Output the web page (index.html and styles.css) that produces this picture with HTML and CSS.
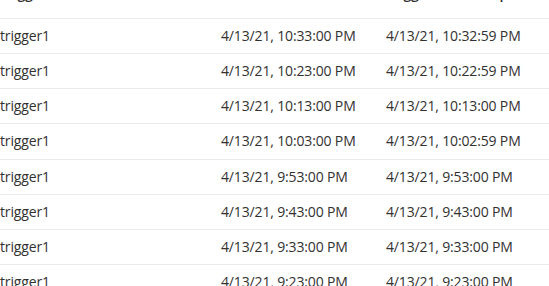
FILE: index.html
```html
<!DOCTYPE html>
<html>
<head>
<meta charset="utf-8">
<link rel="stylesheet" href="styles.css">
</head>
<body>
<div class="list">
  <div class="row header">
    <div class="cell">Trigger name</div>
    <div class="cell">Scheduled time</div>
    <div class="cell">Trigger timestamp</div>
  </div>
  <div class="row"><div class="cell">trigger1</div><div class="cell">4/13/21, 10:33:00 PM</div><div class="cell">4/13/21, 10:32:59 PM</div></div>
  <div class="row"><div class="cell">trigger1</div><div class="cell">4/13/21, 10:23:00 PM</div><div class="cell">4/13/21, 10:22:59 PM</div></div>
  <div class="row"><div class="cell">trigger1</div><div class="cell">4/13/21, 10:13:00 PM</div><div class="cell">4/13/21, 10:13:00 PM</div></div>
  <div class="row"><div class="cell">trigger1</div><div class="cell">4/13/21, 10:03:00 PM</div><div class="cell">4/13/21, 10:02:59 PM</div></div>
  <div class="row"><div class="cell">trigger1</div><div class="cell">4/13/21, 9:53:00 PM</div><div class="cell">4/13/21, 9:53:00 PM</div></div>
  <div class="row"><div class="cell">trigger1</div><div class="cell">4/13/21, 9:43:00 PM</div><div class="cell">4/13/21, 9:43:00 PM</div></div>
  <div class="row"><div class="cell">trigger1</div><div class="cell">4/13/21, 9:33:00 PM</div><div class="cell">4/13/21, 9:33:00 PM</div></div>
  <div class="row"><div class="cell">trigger1</div><div class="cell">4/13/21, 9:23:00 PM</div><div class="cell">4/13/21, 9:23:00 PM</div></div>
</div>
</body>
</html>
```
FILE: styles.css
```css
html, body {
  margin: 0;
  padding: 0;
  background: #ffffff;
  overflow: hidden;
}
body {
  font-family: "Open Sans", "Noto Sans", sans-serif;
  font-size: 14px;
  color: #323130;
  letter-spacing: -0.15px;
}
.list {
  margin-top: -24px;
}
.row {
  display: grid;
  grid-template-columns: 221px 165px 1fr;
  height: 35.15px;
  box-sizing: border-box;
  border-bottom: 1px solid #edebe9;
  align-items: center;
}
.row.header {
  height: 43px;
  align-items: end;
  padding-bottom: 14px;
  font-weight: 600;
}
.cell {
  line-height: 20px;
  white-space: nowrap;
}
```
